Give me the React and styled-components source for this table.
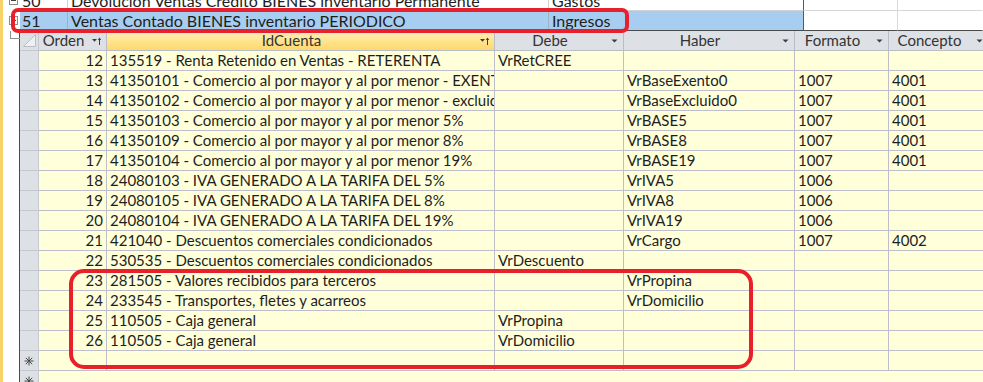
import React from "react";
import styled, { createGlobalStyle, css } from "styled-components";

const Global = createGlobalStyle`
  html, body { margin: 0; padding: 0; background: #ffffff; overflow: hidden; }
  #root { width: 983px; height: 382px; }
`;

const FONT = `Lato, "Liberation Sans", sans-serif`;

const Frame = styled.div`
  position: relative;
  width: 983px;
  height: 382px;
  overflow: hidden;
  display: flex;
  font-family: ${FONT};
  font-size: 15px;
  color: #1e1e1e;
  background: #ffffff;
`;

const SideStrip = styled.div`
  flex: none;
  width: 3px;
  background: #f9d36a;
`;

const Sheet = styled.div`
  flex: 1;
  min-width: 0;
  display: flex;
  flex-direction: column;
  margin-top: -9px;
`;

/* ---------- parent datasheet ---------- */
const ParentRow = styled.div`
  display: flex;
  height: 20px;
  flex: none;
  font-size: 16px;
`;

const ExpanderCell = styled.div`
  position: relative;
  flex: none;
  width: 17px;
  box-sizing: border-box;
  background: #ffffff;
  ${(p) =>
    p.$tail &&
    css`
      &::after {
        content: "";
        position: absolute;
        left: 10px;
        top: 15px;
        bottom: 0;
        border-left: 1px solid #8f8f8f;
      }
    `}
`;

const ExpandBox = styled.div`
  position: absolute;
  left: 6px;
  top: 5px;
  width: 9px;
  height: 9px;
  box-sizing: border-box;
  border: 1px solid #8c8c8c;
  background: #ffffff;
  &::before {
    content: "";
    position: absolute;
    left: 1px;
    right: 1px;
    top: 3px;
    border-top: 1px solid #404040;
  }
`;

const ParentCell = styled.div`
  flex: ${(p) => (p.$grow ? "1" : "none")};
  width: ${(p) => (p.$w ? `${p.$w}px` : "auto")};
  box-sizing: border-box;
  padding: 0 ${(p) => p.$pad ?? 3}px;
  line-height: 19px;
  white-space: nowrap;
  overflow: hidden;
  background: ${(p) => (p.$selected ? "#a7cdf0" : "#ffffff")};
  border-right: 1px solid ${(p) => p.$rightColor || "#d2d2d2"};
  border-bottom: 1px solid ${(p) => p.$bottomColor || "#d2d2d2"};
`;

/* ---------- sub datasheet ---------- */
const SubArea = styled.div`
  flex: 1;
  display: flex;
  min-height: 0;
`;

const TreeGutter = styled.div`
  position: relative;
  flex: none;
  width: 16px;
  background: #ffffff;
  &::before {
    content: "";
    position: absolute;
    left: 7px;
    top: 0;
    width: 9px;
    height: 7px;
    border-left: 1px solid #8f8f8f;
    border-bottom: 1px solid #8f8f8f;
  }
`;

const SubSheet = styled.div`
  flex: 1;
  min-width: 0;
  display: flex;
  flex-direction: column;
  border-left: 1px solid #4a4a4a;
  background: #ffffda;
`;

const GridRow = styled.div`
  display: flex;
  flex: none;
  height: 20px;
`;

const SelectorCell = styled.div`
  flex: none;
  width: 19px;
  box-sizing: border-box;
  display: flex;
  align-items: center;
  justify-content: center;
  background: #dde0e5;
  border-right: 1px solid #c4c8cf;
  border-bottom: 1px solid ${(p) => (p.$noLine ? "transparent" : "#c4c8cf")};
`;

const HeaderCell = styled.div`
  flex: none;
  width: ${(p) => p.$w}px;
  box-sizing: border-box;
  display: flex;
  align-items: center;
  color: #333333;
  line-height: 19px;
  white-space: nowrap;
  overflow: hidden;
  background: ${(p) =>
    p.$active
      ? "linear-gradient(to bottom, #fff1be 0%, #ffe38c 55%, #ffd86e 100%)"
      : "#dde0e5"};
  border-right: 1px solid #b9bdc5;
  border-bottom: 1px solid #b9bdc5;
`;

const HeaderLabel = styled.span`
  flex: 1;
  text-align: center;
  overflow: hidden;
`;

const HeaderIcon = styled.span`
  flex: none;
  width: 18px;
  display: flex;
  align-items: center;
  justify-content: center;
`;

const DataCell = styled.div`
  flex: none;
  width: ${(p) => p.$w}px;
  box-sizing: border-box;
  padding: 0 3px;
  line-height: 19px;
  text-align: ${(p) => p.$align || "left"};
  white-space: nowrap;
  overflow: hidden;
  text-overflow: clip;
  background: #ffffda;
  border-right: 1px solid #bebec8;
  border-bottom: 1px solid #bebec8;
`;

const Filler = styled.div`
  flex: 1;
  background: #ffffda;
`;

/* ---------- annotations ---------- */
const Marker = styled.div`
  position: absolute;
  box-sizing: border-box;
  border: 4px solid #e8202b;
  pointer-events: none;
  left: ${(p) => p.$x}px;
  top: ${(p) => p.$y}px;
  width: ${(p) => p.$w}px;
  height: ${(p) => p.$h}px;
  border-radius: ${(p) => p.$r}px;
`;

/* ---------- icons ---------- */
const DropArrow = () => (
  <svg width="7" height="4" viewBox="0 0 7 4">
    <polygon points="0.5,0.5 6.5,0.5 3.5,3.5" fill="#3c3c3c" />
  </svg>
);

const SortArrow = () => (
  <svg width="10" height="8" viewBox="0 0 10 8">
    <polygon points="0,2 5,2 2.5,4.8" fill="#3c3c3c" />
    <line x1="7.5" y1="1.5" x2="7.5" y2="8" stroke="#3c3c3c" strokeWidth="1" />
    <polygon points="5.8,3 7.5,0.6 9.2,3" fill="#3c3c3c" />
  </svg>
);

const CornerMark = () => (
  <svg width="18" height="19" viewBox="0 0 18 19">
    <polygon points="3.5,15.5 15.5,3.5 15.5,15.5" fill="#eef0f3" stroke="#b9bdc5" strokeWidth="1" />
  </svg>
);

const NewRowMark = () => (
  <svg width="10" height="10" viewBox="0 0 10 10">
    <g stroke="#4a4a4a" strokeWidth="1">
      <line x1="5" y1="0.5" x2="5" y2="9.5" />
      <line x1="0.5" y1="5" x2="9.5" y2="5" />
      <line x1="1.8" y1="1.8" x2="8.2" y2="8.2" />
      <line x1="8.2" y1="1.8" x2="1.8" y2="8.2" />
    </g>
  </svg>
);

/* ---------- data ---------- */
const columns = [
  { label: "Orden", w: 68, align: "right", icon: "sort" },
  { label: "IdCuenta", w: 388, icon: "sort", active: true },
  { label: "Debe", w: 129, icon: "drop" },
  { label: "Haber", w: 171, icon: "drop" },
  { label: "Formato", w: 94, icon: "drop" },
  { label: "Concepto", w: 100, icon: "drop" },
];

const rows = [
  ["12", "135519 - Renta Retenido en Ventas - RETERENTA", "VrRetCREE", "", "", ""],
  ["13", "41350101 - Comercio al por mayor y al por menor - EXENTO", "", "VrBaseExento0", "1007", "4001"],
  ["14", "41350102 - Comercio al por mayor y al por menor - excluido", "", "VrBaseExcluido0", "1007", "4001"],
  ["15", "41350103 - Comercio al por mayor y al por menor 5%", "", "VrBASE5", "1007", "4001"],
  ["16", "41350109 - Comercio al por mayor y al por menor 8%", "", "VrBASE8", "1007", "4001"],
  ["17", "41350104 - Comercio al por mayor y al por menor 19%", "", "VrBASE19", "1007", "4001"],
  ["18", "24080103 - IVA GENERADO A LA TARIFA DEL 5%", "", "VrIVA5", "1006", ""],
  ["19", "24080105 - IVA GENERADO A LA TARIFA DEL 8%", "", "VrIVA8", "1006", ""],
  ["20", "24080104 - IVA GENERADO A LA TARIFA DEL 19%", "", "VrIVA19", "1006", ""],
  ["21", "421040 - Descuentos comerciales condicionados", "", "VrCargo", "1007", "4002"],
  ["22", "530535 - Descuentos comerciales condicionados", "VrDescuento", "", "", ""],
  ["23", "281505 - Valores recibidos para terceros", "", "VrPropina", "", ""],
  ["24", "233545 - Transportes, fletes y acarreos", "", "VrDomicilio", "", ""],
  ["25", "110505 - Caja general", "VrPropina", "", "", ""],
  ["26", "110505 - Caja general", "VrDomicilio", "", "", ""],
];

const parentRows = [
  { id: "50", desc: "Devolución Ventas Crédito BIENES inventario Permanente", type: "Gastos" },
  { id: "51", desc: "Ventas Contado BIENES inventario PERIODICO", type: "Ingresos", selected: true },
];

export default function App() {
  return (
    <>
      <Global />
      <Frame>
        <SideStrip />
        <Sheet>
          {parentRows.map((r) => {
            const sel = !!r.selected;
            const bottom = sel ? "#4a4a4a" : "#d2d2d2";
            return (
              <ParentRow key={r.id}>
                <ExpanderCell $tail={sel}>
                  <ExpandBox />
                </ExpanderCell>
                <ParentCell $w={48} $pad={2} $selected={sel} $rightColor={sel ? "#9fb3c6" : "#d2d2d2"} $bottomColor={bottom}>
                  {r.id}
                </ParentCell>
                <ParentCell $w={481} $selected={sel} $rightColor={sel ? "#9fb3c6" : "#d2d2d2"} $bottomColor={bottom}>
                  {r.desc}
                </ParentCell>
                <ParentCell $w={255} $selected={sel} $rightColor="#5a5a5a" $bottomColor={bottom}>
                  {r.type}
                </ParentCell>
                <ParentCell $w={94} $rightColor="#d8d8d8" $bottomColor={sel ? "#4a4a4a" : "#d8d8d8"} />
                <ParentCell $grow $rightColor="transparent" $bottomColor={sel ? "#4a4a4a" : "#d8d8d8"} />
              </ParentRow>
            );
          })}
          <SubArea>
            <TreeGutter />
            <SubSheet>
              <GridRow>
                <SelectorCell>
                  <CornerMark />
                </SelectorCell>
                {columns.map((c) => (
                  <HeaderCell key={c.label} $w={c.w} $active={c.active}>
                    <HeaderLabel>{c.label}</HeaderLabel>
                    <HeaderIcon>{c.icon === "sort" ? <SortArrow /> : <DropArrow />}</HeaderIcon>
                  </HeaderCell>
                ))}
              </GridRow>
              {rows.map((r) => (
                <GridRow key={r[0]}>
                  <SelectorCell />
                  {columns.map((c, i) => (
                    <DataCell key={c.label} $w={c.w} $align={c.align}>
                      {r[i]}
                    </DataCell>
                  ))}
                </GridRow>
              ))}
              <GridRow>
                <SelectorCell>
                  <NewRowMark />
                </SelectorCell>
                {columns.map((c) => (
                  <DataCell key={c.label} $w={c.w} />
                ))}
              </GridRow>
              <GridRow>
                <SelectorCell $noLine>
                  <NewRowMark />
                </SelectorCell>
                <Filler />
              </GridRow>
            </SubSheet>
          </SubArea>
        </Sheet>
        <Marker $x={11} $y={8} $w={618} $h={25} $r={7} />
        <Marker $x={69} $y={269} $w={684} $h={100} $r={15} />
      </Frame>
    </>
  );
}
